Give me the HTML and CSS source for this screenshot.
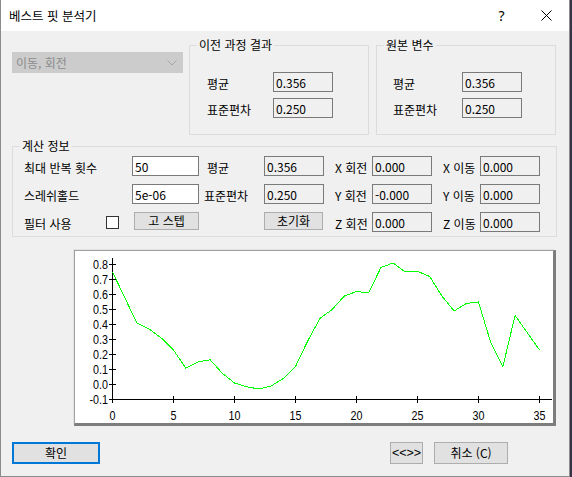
FILE: index.html
```html
<!DOCTYPE html>
<html lang="ko">
  <head>
    <meta charset="UTF-8" />
    <title>베스트 핏 분석기</title>
    <link rel="stylesheet" href="styles.css">
  </head>
  <body>
    <div class="window">
      <div class="titlebar">
        <span class="title">베스트 핏 분석기</span>
        <span class="cap help">?</span>
        <span class="cap close">
          <svg width="11" height="11" viewBox="0 0 11 11"><path d="M0.5 0.5 L10.5 10.5 M10.5 0.5 L0.5 10.5" stroke="#000" stroke-width="1" fill="none"/></svg>
        </span>
      </div>

      <div class="client">
        <div class="topRow">
          <div class="combo">
            <span>이동, 회전</span>
            <svg width="10" height="6" viewBox="0 0 10 6"><polyline points="0.5,0.5 5,5 9.5,0.5" fill="none" stroke="#a6a6a6"/></svg>
          </div>

          <fieldset class="group gPrev">
            <legend>이전 과정 결과</legend>
            <div class="pairGrid">
              <span class="lbl">평균</span>
              <input class="box" readonly value="0.356">
              <span class="lbl">표준편차</span>
              <input class="box" readonly value="0.250">
            </div>
          </fieldset>

          <fieldset class="group gOrig">
            <legend>원본 변수</legend>
            <div class="pairGrid">
              <span class="lbl">평균</span>
              <input class="box" readonly value="0.356">
              <span class="lbl">표준편차</span>
              <input class="box" readonly value="0.250">
            </div>
          </fieldset>
        </div>

        <fieldset class="group gCalc">
          <legend>계산 정보</legend>
          <div class="calcGrid">
            <span class="lbl c1">최대 반복 횟수</span>
            <input class="box edit c3" value="50">
            <span class="lbl c5 indent">평균</span>
            <input class="box c6" readonly value="0.356">
            <span class="lbl c8">X 회전</span>
            <input class="box c9" readonly value="0.000">
            <span class="lbl c11">X 이동</span>
            <input class="box c12" readonly value="0.000">

            <span class="lbl c1">스레쉬홀드</span>
            <input class="box edit c3" value="5e-06">
            <span class="lbl c5">표준편차</span>
            <input class="box c6" readonly value="0.250">
            <span class="lbl c8">Y 회전</span>
            <input class="box c9" readonly value="-0.000">
            <span class="lbl c11">Y 이동</span>
            <input class="box c12" readonly value="0.000">

            <span class="lbl c1only">필터 사용</span>
            <input type="checkbox" class="chk c2">
            <button class="btn c3 stepBtn">고 스텝</button>
            <button class="btn c6 resetBtn">초기화</button>
            <span class="lbl c8">Z 회전</span>
            <input class="box c9" readonly value="0.000">
            <span class="lbl c11">Z 이동</span>
            <input class="box c12" readonly value="0.000">
          </div>
        </fieldset>

        <div class="chart">
          <svg width="478" height="172" viewBox="0 0 478 172">
            <g class="axis">
              <line x1="37.5" y1="7" x2="37.5" y2="148.5"/>
              <line x1="37.5" y1="148.5" x2="477" y2="148.5"/>
              <line x1="34" y1="13.5" x2="41" y2="13.5"/>
              <line x1="34" y1="28.5" x2="41" y2="28.5"/>
              <line x1="34" y1="43.5" x2="41" y2="43.5"/>
              <line x1="34" y1="58.5" x2="41" y2="58.5"/>
              <line x1="34" y1="73.5" x2="41" y2="73.5"/>
              <line x1="34" y1="88.5" x2="41" y2="88.5"/>
              <line x1="34" y1="103.5" x2="41" y2="103.5"/>
              <line x1="34" y1="118.5" x2="41" y2="118.5"/>
              <line x1="34" y1="133.5" x2="41" y2="133.5"/>
              <line x1="34" y1="148.5" x2="41" y2="148.5"/>
              <line x1="37.5" y1="145" x2="37.5" y2="152"/>
              <line x1="98.5" y1="145" x2="98.5" y2="152"/>
              <line x1="159.5" y1="145" x2="159.5" y2="152"/>
              <line x1="220.5" y1="145" x2="220.5" y2="152"/>
              <line x1="281.5" y1="145" x2="281.5" y2="152"/>
              <line x1="342.5" y1="145" x2="342.5" y2="152"/>
              <line x1="403.5" y1="145" x2="403.5" y2="152"/>
              <line x1="464.5" y1="145" x2="464.5" y2="152"/>
            </g>
            <g class="ylab">
              <text transform="translate(33 18) scale(.86 1)">0.8</text>
              <text transform="translate(33 33) scale(.86 1)">0.7</text>
              <text transform="translate(33 48) scale(.86 1)">0.6</text>
              <text transform="translate(33 63) scale(.86 1)">0.5</text>
              <text transform="translate(33 78) scale(.86 1)">0.4</text>
              <text transform="translate(33 93) scale(.86 1)">0.3</text>
              <text transform="translate(33 108) scale(.86 1)">0.2</text>
              <text transform="translate(33 123) scale(.86 1)">0.1</text>
              <text transform="translate(33 138) scale(.86 1)">0.0</text>
              <text transform="translate(33 153) scale(.86 1)">-0.1</text>
            </g>
            <g class="xlab">
              <text transform="translate(37.5 168.5) scale(.86 1)">0</text>
              <text transform="translate(98.5 168.5) scale(.86 1)">5</text>
              <text transform="translate(159.5 168.5) scale(.86 1)">10</text>
              <text transform="translate(220.5 168.5) scale(.86 1)">15</text>
              <text transform="translate(281.5 168.5) scale(.86 1)">20</text>
              <text transform="translate(342.5 168.5) scale(.86 1)">25</text>
              <text transform="translate(403.5 168.5) scale(.86 1)">30</text>
              <text transform="translate(464.5 168.5) scale(.86 1)">35</text>
            </g>
            <!-- 잔차 곡선 -->
            <polyline class="curve" points="37.5,21 49.7,46.5 61.9,72 74.1,78 86.3,87 98.5,99 110.7,117 122.9,111 135.1,108.75 147.3,122.25 159.5,132 171.7,135.75 183.9,138 196.1,135 208.3,127.5 220.5,115.5 232.7,90 244.9,67.5 257.1,58.5 269.3,45 281.5,40.5 293.7,42 305.9,16.5 318.1,12 330.3,21 342.5,20.25 354.7,25.5 366.9,45 379.1,60 391.3,52.5 403.5,51 415.7,91.5 427.9,115.5 440.1,64.5 452.3,81.75 464.5,99"/>
          </svg>
        </div>

        <div class="footer">
          <button class="btn okBtn">확인</button>
          <button class="btn swapBtn">&lt;&lt;&gt;&gt;</button>
          <button class="btn cancelBtn">취소 (C)</button>
        </div>
      </div>
    </div>
  </body>
</html>
```

FILE: styles.css
```css
* {
  margin: 0;
  padding: 0;
  box-sizing: border-box;
}
body {
  width: 572px;
  height: 477px;
  overflow: hidden;
  background-color: #3a3246;
  font-family: "Noto Sans CJK KR", "Noto Sans", sans-serif;
  font-size: 12px;
  color: #000;
}
.window {
  width: 570px;
  height: 477px;
  background-color: #f0f0f0;
  border: 1px solid #8c8c8c;
  border-top: none;
}
.titlebar {
  height: 31px;
  background-color: #fff;
  display: flex;
  align-items: center;
  padding-left: 8px;
}
.title {
  flex: 1;
  font-size: 12.5px;
  line-height: 16px;
}
.cap {
  width: 46px;
  height: 31px;
  display: flex;
  align-items: center;
  justify-content: center;
}
.help {
  font-family: "Noto Sans", sans-serif;
  font-size: 14px;
  padding-left: 3px;
}
.close svg {
  display: block;
}

.client {
  padding: 7px 0 0 11px;
}
.topRow {
  display: flex;
  align-items: flex-start;
}
.combo {
  margin-top: 14px;
  width: 171px;
  height: 21px;
  background-color: #cccccc;
  border: 1px solid #cccccc;
  color: #8b8b8b;
  display: flex;
  align-items: center;
  justify-content: space-between;
  padding: 0 5px 0 3px;
  line-height: 16px;
}
.combo svg {
  display: block;
}

.group {
  border: 1px solid #dcdcdc;
  min-width: 0;
}
.group legend {
  margin-left: 7px;
  padding: 0 2px;
  line-height: 14px;
  font-size: 12px;
}
.gPrev {
  width: 180px;
  margin-left: 6px;
  padding: 20px 0 16px 0;
}
.gOrig {
  width: 180px;
  margin-left: 7px;
  padding: 20px 0 16px 0;
}
.pairGrid {
  display: grid;
  grid-template-columns: 66px 60px;
  grid-template-rows: 20px 20px;
  row-gap: 6px;
  margin-left: 17px;
  align-items: center;
}
.gOrig .pairGrid {
  margin-left: 16px;
  grid-template-columns: 69px 60px;
}

.lbl {
  white-space: nowrap;
  line-height: 16px;
  padding-top: 4px;
}
.box {
  width: 100%;
  height: 20px;
  font: inherit;
  color: #000;
  background-color: #f0f0f0;
  border: 1px solid #7a7a7a;
  padding: 0 2px;
  outline: none;
}
.box.edit {
  background-color: #fff;
}

.gCalc {
  width: 545px;
  margin-top: 4px;
  padding: 3px 0 4px 0;
}
.calcGrid {
  display: grid;
  grid-template-columns: 82px 26px 67px 5px 60px 60px 11px 37px 60px 11px 37px 60px;
  grid-template-rows: repeat(3, 20px);
  row-gap: 8px;
  margin-left: 11px;
  align-items: center;
}
.c1 { grid-column: 1 / 3; }
.c1only { grid-column: 1; }
.c2 { grid-column: 2; }
.c3 { grid-column: 3; }
.c5 { grid-column: 5; }
.c6 { grid-column: 6; }
.c8 { grid-column: 8; }
.c9 { grid-column: 9; }
.c11 { grid-column: 11; }
.c12 { grid-column: 12; }
.indent {
  padding-left: 3px;
}
.chk {
  appearance: none;
  width: 13px;
  height: 13px;
  background-color: #fff;
  border: 1px solid #333;
}

.btn {
  font: inherit;
  color: #000;
  background-color: #e1e1e1;
  border: 1px solid #adadad;
  line-height: 16px;
}
.stepBtn {
  align-self: start;
  height: 18px;
  width: 65px;
  margin-left: 2px;
}
.resetBtn {
  align-self: start;
  height: 18px;
  width: 59px;
}

.chart {
  margin: 13px 0 0 62px;
  width: 482px;
  height: 176px;
  background-color: #fff;
  border-style: solid;
  border-width: 1px 3px 3px 1px;
  border-color: #a0a0a0 #7d7d7d #7d7d7d #a0a0a0;
  box-shadow: -1px -1px 0 #e3e3e3;
}
.chart svg {
  display: block;
}
.axis line {
  stroke: #000;
  stroke-width: 1;
  shape-rendering: crispEdges;
}
.chart text {
  font-family: "Liberation Sans", Arial, sans-serif;
  font-size: 12.5px;
  fill: #000;
}
.ylab text {
  text-anchor: end;
}
.xlab text {
  text-anchor: middle;
}
.curve {
  fill: none;
  stroke: #00ff00;
  stroke-width: 1;
  shape-rendering: crispEdges;
}

.footer {
  display: flex;
  margin-top: 16px;
  padding-right: 61px;
}
.footer .btn {
  height: 22px;
}
.okBtn {
  width: 88px;
  border: 2px solid #0078d7;
}
.swapBtn {
  width: 33px;
  margin-left: auto;
  font-family: "Liberation Sans", Arial, sans-serif;
  font-size: 12.5px;
  padding: 0;
}
.cancelBtn {
  width: 74px;
  margin-left: 11px;
}
```
